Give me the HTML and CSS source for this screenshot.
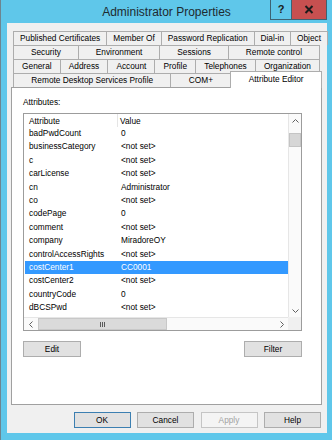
FILE: index.html
```html
<!DOCTYPE html>
<html lang="en">
<head>
    <meta charset="UTF-8">
    <meta name="viewport" content="width=device-width, initial-scale=1.0">
    <title>Administrator Properties</title>
    <link rel="stylesheet" href="styles.css">
</head>
<body>
    <div class="window">
        <div class="titlebar">
            <span class="title">Administrator Properties</span>
            <div class="caption">
                <span class="help-btn">?</span>
                <span class="close-btn">
                    <svg width="10" height="9" viewBox="0 0 10 9"><path d="M1.5 1 L8.5 8 M8.5 1 L1.5 8" stroke="#1b1b1b" stroke-width="2"/></svg>
                </span>
            </div>
        </div>

        <div class="client">
            <div class="tabs">
                <div class="tab-row">
                    <span class="tab">Published Certificates</span>
                    <span class="tab">Member Of</span>
                    <span class="tab">Password Replication</span>
                    <span class="tab">Dial-in</span>
                    <span class="tab">Object</span>
                </div>
                <div class="tab-row">
                    <span class="tab">Security</span>
                    <span class="tab">Environment</span>
                    <span class="tab">Sessions</span>
                    <span class="tab">Remote control</span>
                </div>
                <div class="tab-row">
                    <span class="tab">General</span>
                    <span class="tab">Address</span>
                    <span class="tab">Account</span>
                    <span class="tab">Profile</span>
                    <span class="tab">Telephones</span>
                    <span class="tab">Organization</span>
                </div>
                <div class="tab-row">
                    <span class="tab">Remote Desktop Services Profile</span>
                    <span class="tab">COM+</span>
                    <span class="tab active">Attribute Editor</span>
                </div>
            </div>

            <div class="panel">
                <div class="label">Attributes:</div>
                <div class="listview">
                    <div class="lv-body">
                        <div class="lv-header">
                            <span class="col1">Attribute</span>
                            <span class="col2">Value</span>
                        </div>
                        <div class="lv-row"><span class="col1">badPwdCount</span><span class="col2">0</span></div>
                        <div class="lv-row"><span class="col1">businessCategory</span><span class="col2">&lt;not set&gt;</span></div>
                        <div class="lv-row"><span class="col1">c</span><span class="col2">&lt;not set&gt;</span></div>
                        <div class="lv-row"><span class="col1">carLicense</span><span class="col2">&lt;not set&gt;</span></div>
                        <div class="lv-row"><span class="col1">cn</span><span class="col2">Administrator</span></div>
                        <div class="lv-row"><span class="col1">co</span><span class="col2">&lt;not set&gt;</span></div>
                        <div class="lv-row"><span class="col1">codePage</span><span class="col2">0</span></div>
                        <div class="lv-row"><span class="col1">comment</span><span class="col2">&lt;not set&gt;</span></div>
                        <div class="lv-row"><span class="col1">company</span><span class="col2">MiradoreOY</span></div>
                        <div class="lv-row"><span class="col1">controlAccessRights</span><span class="col2">&lt;not set&gt;</span></div>
                        <div class="lv-row selected"><span class="col1">costCenter1</span><span class="col2">CC0001</span></div>
                        <div class="lv-row"><span class="col1">costCenter2</span><span class="col2">&lt;not set&gt;</span></div>
                        <div class="lv-row"><span class="col1">countryCode</span><span class="col2">0</span></div>
                        <div class="lv-row"><span class="col1">dBCSPwd</span><span class="col2">&lt;not set&gt;</span></div>
                    </div>

                    <div class="vscroll">
                        <span class="sb-arrow">
                            <svg width="7" height="4" viewBox="0 0 7 4"><path d="M0.5 3.5 L3.5 0.5 L6.5 3.5" fill="none" stroke="#606060"/></svg>
                        </span>
                        <div class="sb-track"><div class="vthumb"></div></div>
                        <span class="sb-arrow">
                            <svg width="7" height="4" viewBox="0 0 7 4"><path d="M0.5 0.5 L3.5 3.5 L6.5 0.5" fill="none" stroke="#606060"/></svg>
                        </span>
                    </div>

                    <div class="hscroll">
                        <span class="sb-arrow">
                            <svg width="4" height="7" viewBox="0 0 4 7"><path d="M3.5 0.5 L0.5 3.5 L3.5 6.5" fill="none" stroke="#606060"/></svg>
                        </span>
                        <div class="sb-track">
                            <div class="hthumb">
                                <svg width="6" height="5" viewBox="0 0 6 5"><path d="M0.5 0 V5 M2.5 0 V5 M4.5 0 V5" stroke="#5a5a5a"/></svg>
                            </div>
                        </div>
                        <span class="sb-arrow">
                            <svg width="4" height="7" viewBox="0 0 4 7"><path d="M0.5 0.5 L3.5 3.5 L0.5 6.5" fill="none" stroke="#606060"/></svg>
                        </span>
                    </div>
                    <div class="sb-corner"></div>
                </div>

                <div class="panel-buttons">
                    <button class="btn">Edit</button>
                    <button class="btn">Filter</button>
                </div>
            </div>

            <div class="dialog-buttons">
                <button class="btn default">OK</button>
                <button class="btn">Cancel</button>
                <button class="btn" disabled>Apply</button>
                <button class="btn">Help</button>
            </div>
        </div>
    </div>
</body>
</html>
```

FILE: styles.css
```css
* {
    box-sizing: border-box;
}
body {
    margin: 0;
    font-family: 'Liberation Sans', Arial, sans-serif;
    font-size: 8.3px;
    color: #000;
    background: #5fc7ea;
}
.window {
    width: 332px;
    height: 440px;
    background: #5fc7ea;
    border-left: 1px solid #6d8590;
    display: flex;
    flex-direction: column;
}
.titlebar {
    height: 23px;
    flex: none;
    position: relative;
    text-align: center;
    font-size: 12px;
    line-height: 24px;
    color: #1e2a30;
}
.caption {
    position: absolute;
    top: 0;
    right: 5px;
    display: flex;
}
.help-btn {
    width: 22px;
    height: 20px;
    border: 1px solid #3d6272;
    border-top: none;
    font-size: 11px;
    font-weight: bold;
    line-height: 19px;
    color: #1b1b1b;
}
.close-btn {
    width: 35px;
    height: 20px;
    background: #c75050;
    border: 1px solid #3d6272;
    border-top: none;
    border-left: none;
    display: flex;
    align-items: center;
    justify-content: center;
}
.client {
    flex: 1;
    margin: 0 5px 7px 6px;
    padding-top: 8px;
    background: #f0f0f0;
    display: flex;
    flex-direction: column;
}

/* tabs */
.tabs {
    margin: 0 7px 0 6px;
}
.tab-row {
    display: flex;
    height: 14px;
    align-items: flex-start;
}
.tab {
    flex: 1 1 auto;
    height: 14px;
    padding: 0 6px;
    margin-left: -1px;
    border: 1px solid #adadad;
    border-bottom: none;
    background: #f0f0f0;
    text-align: center;
    line-height: 13px;
    white-space: nowrap;
}
.tab:first-child {
    margin-left: 0;
}
.tab.active {
    position: relative;
    z-index: 1;
    height: 17px;
    margin: -2px -2px 0 -1px;
    background: #fff;
    line-height: 15px;
}

/* attribute editor page */
.panel {
    height: 318px;
    margin: 0 5px 0 4px;
    padding: 9px 19px 0 11px;
    border: 1px solid #a0a0a0;
    background: #fff;
}
.label {
    line-height: 11px;
}
.listview {
    margin-top: 5px;
    width: 279px;
    height: 218px;
    border: 1px solid #9c9c9c;
    display: grid;
    grid-template-columns: 1fr 13px;
    grid-template-rows: 1fr 13px;
}
.lv-body {
    overflow: hidden;
}
.lv-header {
    display: flex;
    height: 13px;
    line-height: 14px;
}
.lv-header .col1 {
    width: 94px;
    padding-left: 5px;
    border-right: 1px solid #e5e5e5;
}
.lv-header .col2 {
    padding-left: 2px;
}
.lv-row {
    display: flex;
    height: 13.4px;
    line-height: 13.4px;
    margin-left: 1px;
    white-space: nowrap;
}
.lv-row .col1 {
    width: 93px;
    padding-left: 4px;
}
.lv-row .col2 {
    padding-left: 3px;
}
.lv-row.selected {
    background: #3399ff;
    color: #fff;
}

/* scrollbars */
.vscroll {
    display: flex;
    flex-direction: column;
    background: #fafafa;
    border-left: 1px solid #e6e6e6;
}
.hscroll {
    display: flex;
    background: #fafafa;
    border-top: 1px solid #e6e6e6;
}
.sb-arrow {
    flex: none;
    width: 13px;
    height: 13px;
    display: flex;
    align-items: center;
    justify-content: center;
}
.vscroll .sb-arrow {
    width: auto;
}
.hscroll .sb-arrow {
    height: auto;
}
.sb-track {
    flex: 1;
}
.vthumb {
    margin: 6px 0 0 0;
    height: 14px;
    background: #d6d6d6;
    border: 1px solid #c4c4c4;
}
.hthumb {
    margin-left: 1px;
    width: 129px;
    height: 100%;
    background: #dadada;
    border: 1px solid #c8c8c8;
    display: flex;
    align-items: center;
    justify-content: center;
}
.sb-corner {
    background: #f0f0f0;
}

/* buttons */
.btn {
    width: 57px;
    height: 16px;
    padding: 0;
    border: 1px solid #adadad;
    background: #e1e1e1;
    font-family: inherit;
    font-size: 8.3px;
    color: #000;
}
.btn.default {
    border-color: #3c7fb1;
}
.btn:disabled {
    background: #f4f4f4;
    border-color: #c5c5c5;
    color: #a2a2a2;
}
.panel-buttons {
    width: 279px;
    margin-top: 10px;
    display: flex;
    justify-content: space-between;
}
.panel-buttons .btn {
    width: 58px;
}
.dialog-buttons {
    margin-top: 7px;
    padding-right: 6px;
    display: flex;
    justify-content: flex-end;
    gap: 6.5px;
}
```
